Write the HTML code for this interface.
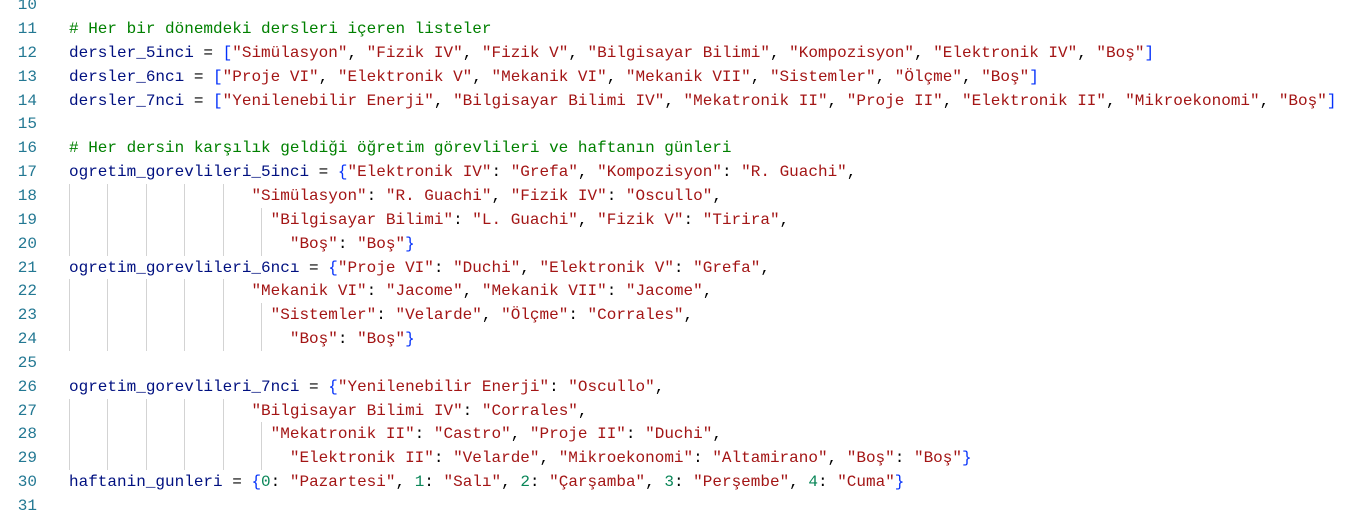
<!DOCTYPE html>
<html><head><meta charset="utf-8"><style>
body{margin:0;background:#fff;width:1346px;height:507px;overflow:hidden;position:relative;font-family:"Liberation Mono",monospace;font-size:16px}
.l{position:absolute;left:0;height:24px;line-height:24px;white-space:pre}
.n{position:absolute;left:0;width:37px;text-align:right;color:#237893}
.c{position:absolute;left:69px;color:#000}
.v{color:#001080}.s{color:#a31515}.m{color:#008000}.b{color:#0431fa}.d{color:#098658}
.g{position:absolute;width:1px;height:24px;background:#d3d3d3}
</style></head><body>
<div id="r"></div>
<script>
const L=[
[10,''],
[11,'<span class="m"># Her bir dönemdeki dersleri içeren listeler</span>'],
[12,'<span class="v">dersler_5inci</span> = <span class="b">[</span><span class="s">"Simülasyon"</span>, <span class="s">"Fizik IV"</span>, <span class="s">"Fizik V"</span>, <span class="s">"Bilgisayar Bilimi"</span>, <span class="s">"Kompozisyon"</span>, <span class="s">"Elektronik IV"</span>, <span class="s">"Boş"</span><span class="b">]</span>'],
[13,'<span class="v">dersler_6ncı</span> = <span class="b">[</span><span class="s">"Proje VI"</span>, <span class="s">"Elektronik V"</span>, <span class="s">"Mekanik VI"</span>, <span class="s">"Mekanik VII"</span>, <span class="s">"Sistemler"</span>, <span class="s">"Ölçme"</span>, <span class="s">"Boş"</span><span class="b">]</span>'],
[14,'<span class="v">dersler_7nci</span> = <span class="b">[</span><span class="s">"Yenilenebilir Enerji"</span>, <span class="s">"Bilgisayar Bilimi IV"</span>, <span class="s">"Mekatronik II"</span>, <span class="s">"Proje II"</span>, <span class="s">"Elektronik II"</span>, <span class="s">"Mikroekonomi"</span>, <span class="s">"Boş"</span><span class="b">]</span>'],
[15,''],
[16,'<span class="m"># Her dersin karşılık geldiği öğretim görevlileri ve haftanın günleri</span>'],
[17,'<span class="v">ogretim_gorevlileri_5inci</span> = <span class="b">{</span><span class="s">"Elektronik IV"</span>: <span class="s">"Grefa"</span>, <span class="s">"Kompozisyon"</span>: <span class="s">"R. Guachi"</span>,'],
[18,'                   <span class="s">"Simülasyon"</span>: <span class="s">"R. Guachi"</span>, <span class="s">"Fizik IV"</span>: <span class="s">"Oscullo"</span>,',5],
[19,'                     <span class="s">"Bilgisayar Bilimi"</span>: <span class="s">"L. Guachi"</span>, <span class="s">"Fizik V"</span>: <span class="s">"Tirira"</span>,',6],
[20,'                       <span class="s">"Boş"</span>: <span class="s">"Boş"</span><span class="b">}</span>',6],
[21,'<span class="v">ogretim_gorevlileri_6ncı</span> = <span class="b">{</span><span class="s">"Proje VI"</span>: <span class="s">"Duchi"</span>, <span class="s">"Elektronik V"</span>: <span class="s">"Grefa"</span>,'],
[22,'                   <span class="s">"Mekanik VI"</span>: <span class="s">"Jacome"</span>, <span class="s">"Mekanik VII"</span>: <span class="s">"Jacome"</span>,',5],
[23,'                     <span class="s">"Sistemler"</span>: <span class="s">"Velarde"</span>, <span class="s">"Ölçme"</span>: <span class="s">"Corrales"</span>,',6],
[24,'                       <span class="s">"Boş"</span>: <span class="s">"Boş"</span><span class="b">}</span>',6],
[25,''],
[26,'<span class="v">ogretim_gorevlileri_7nci</span> = <span class="b">{</span><span class="s">"Yenilenebilir Enerji"</span>: <span class="s">"Oscullo"</span>,'],
[27,'                   <span class="s">"Bilgisayar Bilimi IV"</span>: <span class="s">"Corrales"</span>,',5],
[28,'                     <span class="s">"Mekatronik II"</span>: <span class="s">"Castro"</span>, <span class="s">"Proje II"</span>: <span class="s">"Duchi"</span>,',6],
[29,'                       <span class="s">"Elektronik II"</span>: <span class="s">"Velarde"</span>, <span class="s">"Mikroekonomi"</span>: <span class="s">"Altamirano"</span>, <span class="s">"Boş"</span>: <span class="s">"Boş"</span><span class="b">}</span>',6],
[30,'<span class="v">haftanin_gunleri</span> = <span class="b">{</span><span class="d">0</span>: <span class="s">"Pazartesi"</span>, <span class="d">1</span>: <span class="s">"Salı"</span>, <span class="d">2</span>: <span class="s">"Çarşamba"</span>, <span class="d">3</span>: <span class="s">"Perşembe"</span>, <span class="d">4</span>: <span class="s">"Cuma"</span><span class="b">}</span>'],
[31,'']];
let h='';
for(const [n,t,g] of L){
 const top=17+(n-11)*23.85-12+11.9-12+0.1;
 const y=(17+(n-11)*23.85).toFixed(2);
 h+=`<div class="l" style="top:${y}px;width:1346px"><span class="n">${n}</span><span class="c">${t}</span></div>`;
 if(g){for(let k=0;k<g;k++)h+=`<div class="g" style="top:${y}px;left:${(69+k*38.4).toFixed(1)}px"></div>`;}
}
document.getElementById('r').innerHTML=h;
</script>
</body></html>
